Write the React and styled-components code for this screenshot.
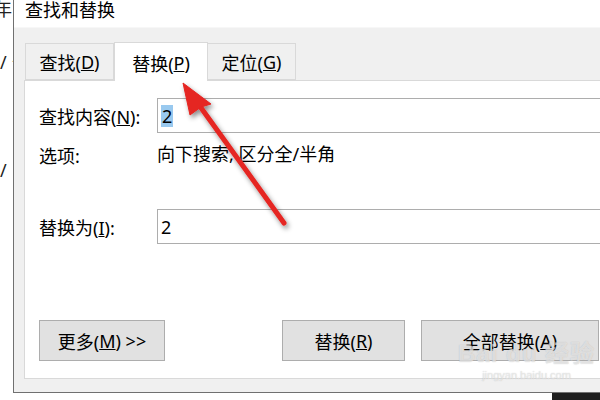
import React from "react";
import styled, { createGlobalStyle } from "styled-components";

const GlobalStyle = createGlobalStyle`
  body {
    margin: 0;
    background: #fff;
    font-family: "Noto Sans", "Noto Sans CJK SC", sans-serif;
  }
`;

const Page = styled.div`
  position: relative;
  width: 600px;
  height: 400px;
  overflow: hidden;
  display: flex;
  flex-direction: column;
  background: #fff;
  color: #000;
  font-size: 18px;
`;

const TopArea = styled.div`
  display: flex;
  height: 393px;
  flex: none;
  overflow: hidden;
`;

const Strip = styled.div`
  width: 13px;
  flex: none;
  overflow: hidden;
  display: flex;
  flex-direction: column;
  color: #222;
  font-size: 18px;
  line-height: 20px;
  white-space: nowrap;
`;

const StripLine = styled.div`
  margin-left: ${({ shift }) => shift || 0}px;
  margin-top: ${({ top }) => top || 0}px;
`;

const Dialog = styled.div`
  width: 640px;
  flex: none;
  display: flex;
  flex-direction: column;
  background: #f0f0f0;
  border-left: 1px solid #707070;
  border-bottom: 1px solid #707070;
`;

const TitleBar = styled.div`
  height: 28px;
  flex: none;
  box-sizing: border-box;
  padding-left: 11px;
  background: #fff;
  border-bottom: 1px solid #f7f7f7;
  line-height: 20px;
`;

const Body = styled.div`
  flex: 1;
  display: flex;
  flex-direction: column;
  padding: 15px 0 13px 10px;
`;

const TabRow = styled.div`
  display: flex;
  align-items: flex-end;
  height: 37px;
  padding-left: 1px;
`;

const Tab = styled.div`
  position: relative;
  box-sizing: border-box;
  width: ${({ w }) => w}px;
  height: ${({ active }) => (active ? 39 : 37)}px;
  margin-bottom: ${({ active }) => (active ? -1 : 0)}px;
  display: flex;
  align-items: center;
  justify-content: center;
  background: ${({ active }) => (active ? "#fff" : "#f0f0f0")};
  border: 1px solid #d9d9d9;
  border-bottom: ${({ active }) => (active ? "none" : "1px solid #d9d9d9")};
  border-left: ${({ first, active }) =>
    first || active ? "1px solid #d9d9d9" : "none"};
  z-index: ${({ active }) => (active ? 1 : 0)};
  padding-top: ${({ active }) => (active ? 1 : 0)}px;
`;

const Panel = styled.div`
  flex: 1;
  display: flex;
  flex-direction: column;
  background: #fff;
  border: 1px solid #d9d9d9;
  border-right: none;
  padding: 17px 0 17px 14px;
`;

const FieldRow = styled.div`
  display: flex;
  align-items: center;
  margin-top: ${({ top }) => top || 0}px;
`;

const Label = styled.div`
  width: 118px;
  flex: none;
  line-height: 24px;
  padding-top: 2px;
`;

const Input = styled.div`
  box-sizing: border-box;
  width: 470px;
  height: 35px;
  border: 1px solid #adadad;
  padding-left: 3px;
  display: flex;
  align-items: center;
  line-height: 22px;
`;

const Selected = styled.span`
  background: #99c9ef;
  padding: 0 1px;
  line-height: 22px;
`;

const OptionRow = styled.div`
  display: flex;
  margin-top: 9px;
  height: 24px;
  line-height: 24px;
`;

const ButtonGrid = styled.div`
  margin-top: auto;
  display: grid;
  grid-template-columns: 126px 117px 123px 16px 178px;
`;

const Button = styled.div`
  grid-column: ${({ col }) => col};
  box-sizing: border-box;
  height: 41px;
  display: flex;
  align-items: center;
  justify-content: center;
  background: #e1e1e1;
  border: 1px solid #adadad;
`;

const BottomArea = styled.div`
  flex: 1;
  display: flex;
`;

const BlackBlock = styled.div`
  width: 48px;
  margin-left: auto;
  background: #1e1e1e;
`;

const Overlay = styled.svg`
  position: absolute;
  left: 0;
  top: 0;
  pointer-events: none;
`;

const Watermark = styled.div`
  position: absolute;
  left: 458px;
  top: 340px;
  display: flex;
  flex-direction: column;
  align-items: center;
  pointer-events: none;
  color: rgba(255, 255, 255, 0.55);
  text-shadow: 0 0 1px rgba(150, 150, 150, 0.6);
`;

const MarkMain = styled.div`
  font-family: "Liberation Sans", "Noto Sans CJK SC", sans-serif;
  font-weight: bold;
  font-size: 24px;
  line-height: 28px;
  letter-spacing: 1px;
`;

const MarkSub = styled.div`
  font-family: "Liberation Sans", sans-serif;
  font-size: 11px;
  line-height: 12px;
  margin-top: 1px;
`;

export default function App() {
  return (
    <>
      <GlobalStyle />
      <Page>
        <TopArea>
          <Strip>
            <StripLine shift={-6} top={-1}>年</StripLine>
            <StripLine top={33}>/ 么</StripLine>
            <StripLine top={88}>/ ノ</StripLine>
          </Strip>
          <Dialog>
            <TitleBar>查找和替换</TitleBar>
            <Body>
              <TabRow>
                <Tab w={89} first>
                  查找(<u>D</u>)
                </Tab>
                <Tab w={94} active>
                  替换(<u>P</u>)
                </Tab>
                <Tab w={88}>
                  定位(<u>G</u>)
                </Tab>
              </TabRow>
              <Panel>
                <FieldRow>
                  <Label>
                    查找内容(<u>N</u>):
                  </Label>
                  <Input>
                    <Selected>2</Selected>
                  </Input>
                </FieldRow>
                <OptionRow>
                  <Label>选项:</Label>
                  <span>向下搜索, 区分全/半角</span>
                </OptionRow>
                <FieldRow top={43}>
                  <Label>
                    替换为(<u>I</u>):
                  </Label>
                  <Input>2</Input>
                </FieldRow>
                <ButtonGrid>
                  <Button col={1}>
                    更多(<u>M</u>) &gt;&gt;
                  </Button>
                  <Button col={3}>
                    替换(<u>R</u>)
                  </Button>
                  <Button col={5}>
                    全部替换(<u>A</u>)
                  </Button>
                </ButtonGrid>
              </Panel>
            </Body>
          </Dialog>
        </TopArea>
        <BottomArea>
          <BlackBlock />
        </BottomArea>
        <Watermark>
          <MarkMain>Bai du 经验</MarkMain>
          <MarkSub>jingyan.baidu.com</MarkSub>
        </Watermark>
        <Overlay width="600" height="400" viewBox="0 0 600 400">
          <defs>
            <filter id="shadow" x="-20%" y="-20%" width="140%" height="140%">
              <feDropShadow dx="2" dy="3" stdDeviation="2.5" floodColor="#000" floodOpacity="0.45" />
            </filter>
          </defs>
          <g filter="url(#shadow)" fill="#e52521" stroke="#e52521">
            <line x1="284" y1="223" x2="199" y2="105" strokeWidth="5" strokeLinecap="round" />
            <polygon points="183,83 211,104 201,107 190,115" strokeWidth="1" strokeLinejoin="round" />
          </g>
        </Overlay>
      </Page>
    </>
  );
}
